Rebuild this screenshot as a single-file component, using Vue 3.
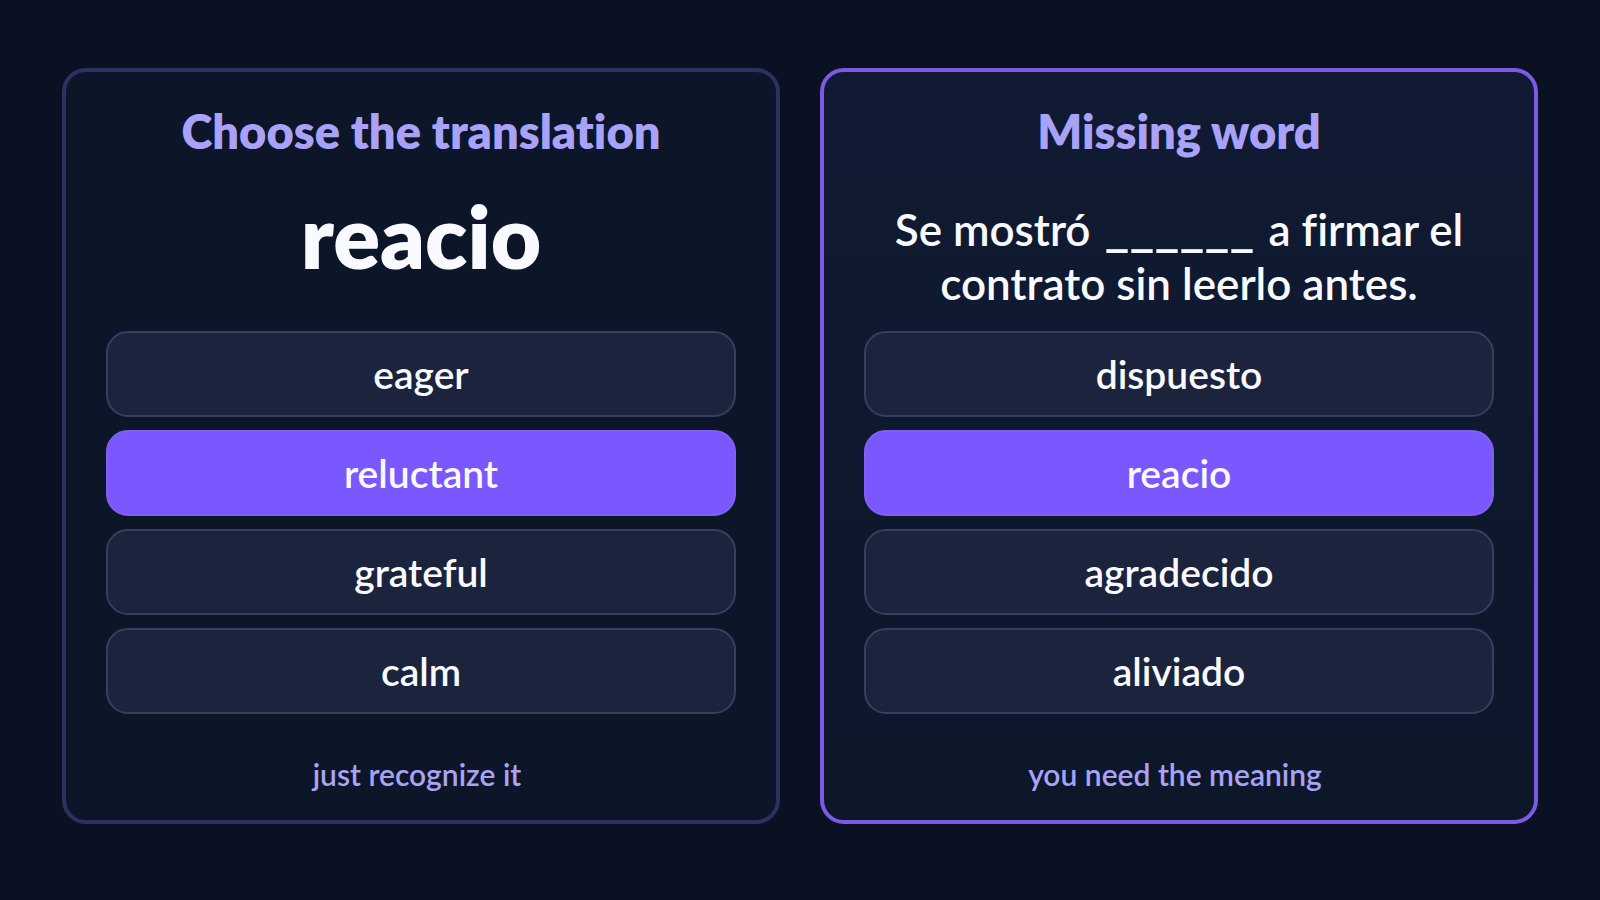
<template>
  <main class="page">
    <section v-for="card in cards" :key="card.title" class="card" :class="{ highlighted: card.highlighted }">
      <h2>{{ card.title }}</h2>

      <div class="prompt">
        <p v-if="card.word" class="word">{{ card.word }}</p>
        <p v-else class="sentence">
          <span>{{ card.before }}</span>
          <span class="blank">______</span>
          <span>{{ card.after }}</span>
          <span>{{ card.rest }}</span>
        </p>
      </div>

      <div class="options">
        <button
          v-for="option in card.options"
          :key="option"
          type="button"
          class="option"
          :class="{ selected: option === card.selected }"
          :aria-pressed="option === card.selected"
          @click="card.selected = option"
        >
          {{ option }}
        </button>
      </div>

      <p class="hint">{{ card.hint }}</p>
    </section>
  </main>
</template>

<script setup>
import { ref } from 'vue'

const cards = ref([
  {
    title: 'Choose the translation',
    word: 'reacio',
    options: ['eager', 'reluctant', 'grateful', 'calm'],
    selected: 'reluctant',
    hint: 'just recognize it',
    highlighted: false
  },
  {
    title: 'Missing word',
    before: 'Se mostró',
    after: 'a firmar el',
    rest: 'contrato sin leerlo antes.',
    options: ['dispuesto', 'reacio', 'agradecido', 'aliviado'],
    selected: 'reacio',
    hint: 'you need the meaning',
    highlighted: true
  }
])
</script>

<style>
body {
  margin: 0;
  background: #0a1122;
}
</style>

<style scoped>
.page {
  box-sizing: border-box;
  min-height: 100vh;
  padding: 68px 62px 76px;
  display: grid;
  grid-template-columns: 1fr 1fr;
  gap: 40px;
  font-family: Lato, "Open Sans", sans-serif;
  font-variant-ligatures: none;
  color: #f8faff;
}

.card {
  box-sizing: border-box;
  display: flex;
  flex-direction: column;
  padding: 32px 40px 16px;
  border: 4px solid #2f3062;
  border-radius: 24px;
  background: #0d1628;
  text-align: center;
}

.card.highlighted {
  border-color: #7d5ae6;
  background: linear-gradient(#101a32, #0d172a);
}

h2 {
  margin: 0;
  font-size: 47px;
  line-height: 54px;
  font-weight: 800;
  color: #aaa2f8;
}

.prompt {
  min-height: 173px;
}

.prompt p {
  margin: 0 auto;
}

.word {
  padding-top: 28px;
  font-size: 87px;
  line-height: 100px;
  font-weight: 800;
}

.sentence {
  display: flex;
  flex-wrap: wrap;
  justify-content: center;
  column-gap: 14px;
  max-width: 600px;
  padding-top: 44px;
  font-size: 44px;
  line-height: 54px;
  font-weight: 600;
}

.blank {
  font-size: 54px;
  line-height: 46px;
}

.options {
  display: flex;
  flex-direction: column;
  gap: 13px;
}

.option {
  height: 86px;
  padding: 0 20px;
  border: 2px solid #363f5f;
  border-radius: 22px;
  background: #1b243c;
  color: inherit;
  font-family: inherit;
  font-variant-ligatures: inherit;
  font-size: 39px;
  line-height: 46px;
  font-weight: 600;
  cursor: pointer;
}

.option.selected {
  border-color: #8061f2;
  background: #7a57ff;
}

.hint {
  margin: 40px 8px 0 0;
  font-size: 30px;
  line-height: 40px;
  font-weight: 600;
  color: #a9a3f5;
}
</style>
